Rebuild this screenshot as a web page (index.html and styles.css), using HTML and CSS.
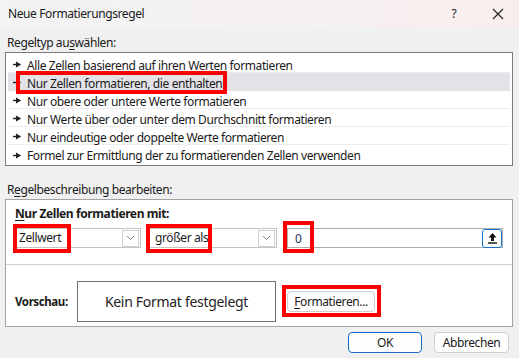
FILE: index.html
```html
<!DOCTYPE html>
<html lang="de">
<head>
<meta charset="utf-8">
<title>Neue Formatierungsregel</title>
<link rel="stylesheet" href="styles.css">
</head>
<body>
<div class="dialog">
  <div class="titlebar">
    <span class="title">Neue Formatierungsregel</span>
    <span class="help">?</span>
    <span class="close"><svg width="12" height="12" viewBox="0 0 12 12"><path d="M1 1L11 11M11 1L1 11" stroke="#222" stroke-width="1.1" fill="none"/></svg></span>
  </div>
  <div class="content">
    <div class="label first">Regeltyp au<u>s</u>wählen:</div>
    <div class="list">
      <div class="row"><svg class="arr" width="9" height="7" viewBox="0 0 9 7"><path d="M0 3.5H4" stroke="#222" stroke-width="1.4"/><path d="M3 0.6L8.2 3.5L3 6.4Z" fill="#222"/></svg><span>Alle Zellen basierend auf ihren Werten formatieren</span></div>
      <div class="row sel"><svg class="arr" width="9" height="7" viewBox="0 0 9 7"><path d="M0 3.5H4" stroke="#222" stroke-width="1.4"/><path d="M3 0.6L8.2 3.5L3 6.4Z" fill="#222"/></svg><span>Nur Zellen formatieren, die enthalten</span><i class="mark mark-row"></i></div>
      <div class="row"><svg class="arr" width="9" height="7" viewBox="0 0 9 7"><path d="M0 3.5H4" stroke="#222" stroke-width="1.4"/><path d="M3 0.6L8.2 3.5L3 6.4Z" fill="#222"/></svg><span>Nur obere oder untere Werte formatieren</span></div>
      <div class="row"><svg class="arr" width="9" height="7" viewBox="0 0 9 7"><path d="M0 3.5H4" stroke="#222" stroke-width="1.4"/><path d="M3 0.6L8.2 3.5L3 6.4Z" fill="#222"/></svg><span>Nur Werte über oder unter dem Durchschnitt formatieren</span></div>
      <div class="row"><svg class="arr" width="9" height="7" viewBox="0 0 9 7"><path d="M0 3.5H4" stroke="#222" stroke-width="1.4"/><path d="M3 0.6L8.2 3.5L3 6.4Z" fill="#222"/></svg><span>Nur eindeutige oder doppelte Werte formatieren</span></div>
      <div class="row last"><svg class="arr" width="9" height="7" viewBox="0 0 9 7"><path d="M0 3.5H4" stroke="#222" stroke-width="1.4"/><path d="M3 0.6L8.2 3.5L3 6.4Z" fill="#222"/></svg><span>Formel zur Ermittlung der zu formatierenden Zellen verwenden</span></div>
    </div>

    <div class="label second">R<u>e</u>gelbeschreibung bearbeiten:</div>
    <div class="panel">
      <div class="panel-top">
        <div class="bold"><u>N</u>ur Zellen formatieren mit:</div>
        <div class="controls">
          <div class="combo c1"><span class="ctext">Zellwert</span><span class="chev"><svg width="9" height="6" viewBox="0 0 9 6"><path d="M1 1L4.5 4.5L8 1" stroke="#888" stroke-width="1" fill="none"/></svg></span><i class="mark mark-c1"></i></div>
          <div class="combo c2"><span class="ctext">größer als</span><span class="chev"><svg width="9" height="6" viewBox="0 0 9 6"><path d="M1 1L4.5 4.5L8 1" stroke="#888" stroke-width="1" fill="none"/></svg></span><i class="mark mark-c2"></i></div>
          <div class="input"><span class="itext">0</span><span class="upbtn"><svg width="11" height="12" viewBox="0 0 11 12"><path d="M5.5 1L1.5 5.5H4V9H7V5.5H9.5Z" fill="#111"/><path d="M1 11H10" stroke="#111" stroke-width="1.4"/></svg></span><i class="mark mark-in"></i></div>
        </div>
      </div>
      <div class="panel-bottom">
        <div class="bold vlabel">Vorschau:</div>
        <div class="preview">Kein Format festgelegt</div>
        <div class="btn fmt"><u>F</u>ormatieren...<i class="mark mark-fmt"></i></div>
      </div>
    </div>

    <div class="footer">
      <div class="btn ok">OK</div>
      <div class="btn cancel">Abbrechen</div>
    </div>
  </div>
</div>
</body>
</html>
```

FILE: styles.css
```css
* { box-sizing: border-box; }
html, body { margin: 0; padding: 0; }
body {
  width: 519px;
  height: 358px;
  background: #f0f0f0;
  font-family: "Noto Sans", "Open Sans", sans-serif;
  font-size: 12px;
  letter-spacing: -0.4px;
  color: #1a1a1a;
  overflow: hidden;
}
u { text-decoration: underline; text-underline-offset: 2px; }
.dialog { width: 519px; height: 358px; }

.titlebar {
  height: 27px;
  display: flex;
  align-items: center;
  padding-left: 8px;
  background: linear-gradient(90deg, #f3f3f3 0%, #f5f1f1 45%, #f9eeee 100%);
}
.title { flex: 1; line-height: 16px; }
.help { width: 12px; text-align: center; margin-right: 32px; }
.close { width: 12px; height: 12px; margin-right: 15px; display: flex; }

.content { padding: 0 6px 0 5px; }
.label { line-height: 16px; padding-left: 2px; }
.label.first { margin-top: 8px; }
.label.second { margin-top: 16px; }

.list {
  margin-top: 1px;
  background: #fff;
  border: 1px solid #7a7a7a;
  padding: 2px 2px 2px 2px;
}
.row {
  position: relative;
  height: 18px;
  display: flex;
  align-items: center;
  padding-left: 5px;
  padding-top: 3px;
  border-bottom: 1px solid #ececec;
  white-space: nowrap;
}
.row.last { border-bottom: none; }
.row.sel { background: #e2e2e7; border-bottom-color: #e2e2e7; }
.arr { flex: none; margin-right: 5px; margin-top: -1px; }

.mark {
  position: absolute;
  border: 4px solid #ff0000;
  pointer-events: none;
}
.mark-row { left: 8px; top: -2px; width: 211px; height: 23px; }

.panel {
  margin-top: 1px;
  background: #fff;
  border: 1px solid #a3a3a3;
}
.panel-top {
  padding: 6px 9px 16px 9px;
  border-bottom: 1px solid #d0d0d0;
}
.bold { font-weight: 700; line-height: 16px; }
.controls {
  margin-top: 6px;
  display: flex;
  align-items: center;
}
.combo {
  position: relative;
  height: 20px;
  border: 1px solid #c4c4c4;
  display: flex;
  align-items: center;
  justify-content: space-between;
}
.c1 { width: 126px; margin-right: 7px; }
.c2 { width: 129px; margin-right: 10px; }
.ctext { padding-left: 3px; line-height: 16px; }
.c2 .ctext { padding-left: 6px; }
.chev {
  width: 17px;
  height: 17px;
  margin-right: 1px;
  border: 1px solid #d0d0d0;
  display: flex;
  align-items: center;
  justify-content: center;
}
.mark-c1 { left: -3px; top: -5px; width: 58px; height: 29px; }
.mark-c2 { left: -3px; top: -5px; width: 66px; height: 29px; }

.input {
  position: relative;
  width: 216px;
  height: 20px;
  border: 1px solid #adadad;
  display: flex;
  align-items: center;
  justify-content: space-between;
}
.itext { padding-left: 7px; color: #1c2f5a; }
.upbtn {
  width: 20px;
  height: 19px;
  margin-right: 0;
  border: 1.5px solid #1a73c8;
  border-radius: 3px;
  background: #fff;
  display: flex;
  align-items: center;
  justify-content: center;
}
.mark-in { left: -5px; top: -8px; width: 31px; height: 32px; }

.panel-bottom {
  padding: 16px 9px 4px 9px;
  display: flex;
  align-items: center;
}
.vlabel { width: 62px; font-size: 11.5px; }
.preview {
  width: 199px;
  height: 41px;
  border: 1px solid #707070;
  display: flex;
  align-items: center;
  justify-content: center;
  font-size: 14px;
  letter-spacing: -0.3px;
  color: #222;
  margin-right: 11px;
}
.btn {
  position: relative;
  height: 21px;
  border: 1px solid #cfcfcf;
  border-radius: 4px;
  background: #fdfdfd;
  display: flex;
  align-items: center;
  justify-content: center;
  line-height: 16px;
}
.fmt { width: 88px; }
.mark-fmt { left: -6px; top: -7px; width: 99px; height: 32px; }

.footer {
  margin-top: 5px;
  display: flex;
  justify-content: flex-end;
  padding-right: 4px;
}
.ok { width: 74px; border-color: #1a6fc4; margin-right: 12px; }
.cancel { width: 75px; }
```
